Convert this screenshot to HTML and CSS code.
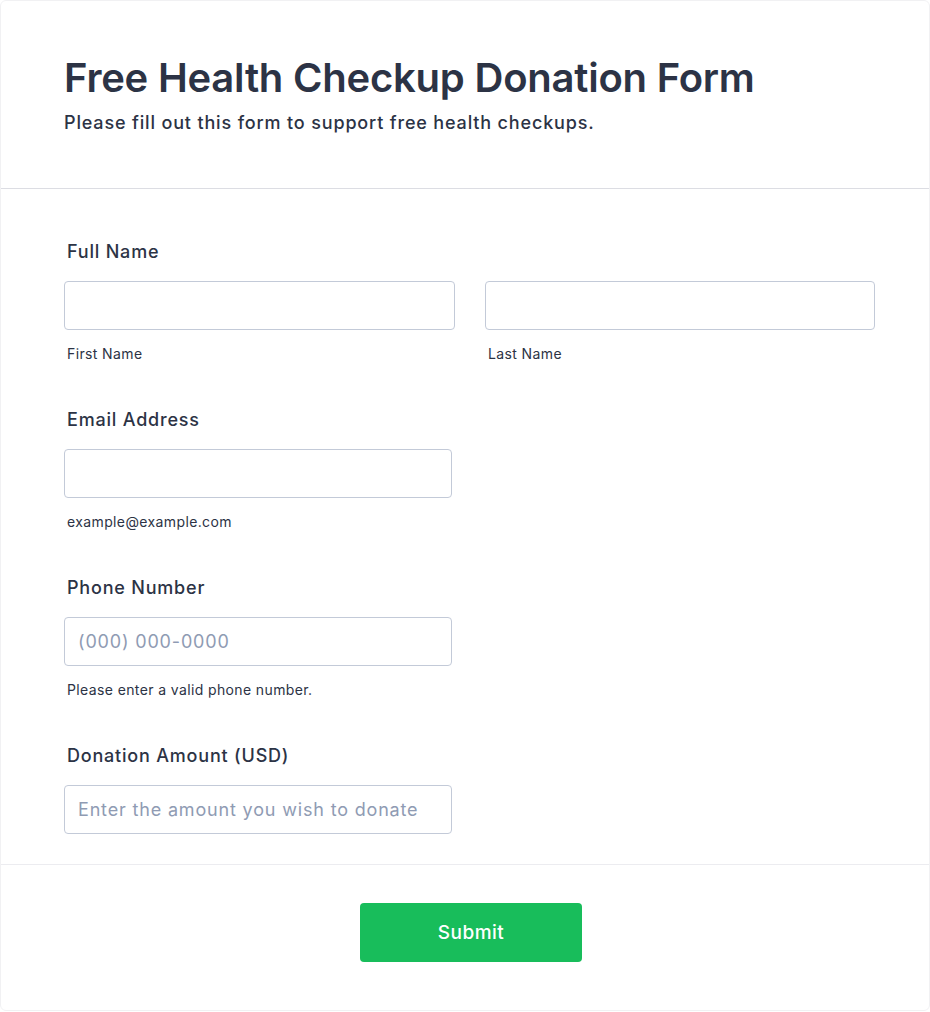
FILE: index.html
```html
<!DOCTYPE html>
<html lang="en">
<head>
<meta charset="utf-8">
<title>Free Health Checkup Donation Form</title>
<link rel="stylesheet" href="styles.css">
</head>
<body>
<form class="card">
  <header class="card-header">
    <h1 class="title">Free Health Checkup Donation Form</h1>
    <p class="subtitle">Please fill out this form to support free health checkups.</p>
  </header>
  <div class="fields">
    <div class="field">
      <label class="label">Full Name</label>
      <div class="row">
        <div class="col">
          <input class="input input-first" type="text">
          <span class="sublabel">First Name</span>
        </div>
        <div class="col">
          <input class="input input-last" type="text">
          <span class="sublabel">Last Name</span>
        </div>
      </div>
    </div>
    <div class="field">
      <label class="label">Email Address</label>
      <input class="input" type="email">
      <span class="sublabel">example@example.com</span>
    </div>
    <div class="field">
      <label class="label">Phone Number</label>
      <input class="input" type="tel" placeholder="(000) 000-0000">
      <span class="sublabel">Please enter a valid phone number.</span>
    </div>
    <div class="field field-last">
      <label class="label">Donation Amount (USD)</label>
      <input class="input" type="text" placeholder="Enter the amount you wish to donate">
    </div>
  </div>
  <footer class="card-footer">
    <button class="submit" type="button">Submit</button>
  </footer>
</form>
</body>
</html>
```
FILE: styles.css
```css
* { box-sizing: border-box; }
html, body { margin: 0; padding: 0; background: #ffffff; }
body {
  font-family: Inter, "Noto Sans", sans-serif;
  color: #2c3345;
}
.card {
  width: 930px;
  height: 1011px;
  border: 1px solid #f1f1f3;
  border-radius: 6px;
  background: #fff;
  display: flex;
  flex-direction: column;
}
.card-header {
  padding: 53px 63px 0;
  height: 188px;
  border-bottom: 1px solid #dcdde3;
}
.title {
  margin: 0;
  font-size: 40px;
  line-height: 48px;
  font-weight: 600;
  color: #2c3345;
  letter-spacing: -0.22px;
}
.subtitle {
  margin: 9px 0 0;
  font-size: 18px;
  line-height: 24px;
  font-weight: 500;
  color: #2c3345;
  letter-spacing: 0.84px;
}
.fields {
  padding: 50px 63px 0 63px;
  border-bottom: 1px solid #ececf0;
}
.field {
  display: flex;
  flex-direction: column;
  align-items: flex-start;
  padding-bottom: 43px;
}
.field-last { padding-bottom: 30px; }
.label {
  font-size: 18px;
  line-height: 24px;
  font-weight: 500;
  padding-left: 3px;
  margin-top: 1px;
  margin-bottom: 17px;
  letter-spacing: 0.8px;
}
.row {
  display: flex;
  gap: 30px;
  width: 100%;
}
.col {
  display: flex;
  flex-direction: column;
  flex: 0 0 auto;
}
.input {
  width: 388px;
  height: 49px;
  border: 1px solid #c3cad8;
  border-radius: 4px;
  padding: 0 13px;
  font-family: Inter, "Noto Sans", sans-serif;
  font-size: 18px;
  letter-spacing: 0.83px;
  color: #2c3345;
  background: #fff;
  outline: none;
}
.input-first { width: 391px; }
.input-last { width: 390px; }
.input::placeholder { color: #8f9bb3; }
.sublabel {
  margin-top: 14px;
  padding-left: 3px;
  font-size: 14px;
  line-height: 20px;
  letter-spacing: 0.38px;
  color: #2c3345;
}
.card-footer {
  display: flex;
  justify-content: center;
  padding-top: 38px;
  padding-left: 12px;
}
.submit {
  width: 222px;
  height: 59px;
  border: none;
  border-radius: 4px;
  background: #18bd5b;
  color: #fff;
  font-family: Inter, "Noto Sans", sans-serif;
  font-size: 19px;
  font-weight: 500;
  letter-spacing: 0.5px;
  cursor: pointer;
}
```
